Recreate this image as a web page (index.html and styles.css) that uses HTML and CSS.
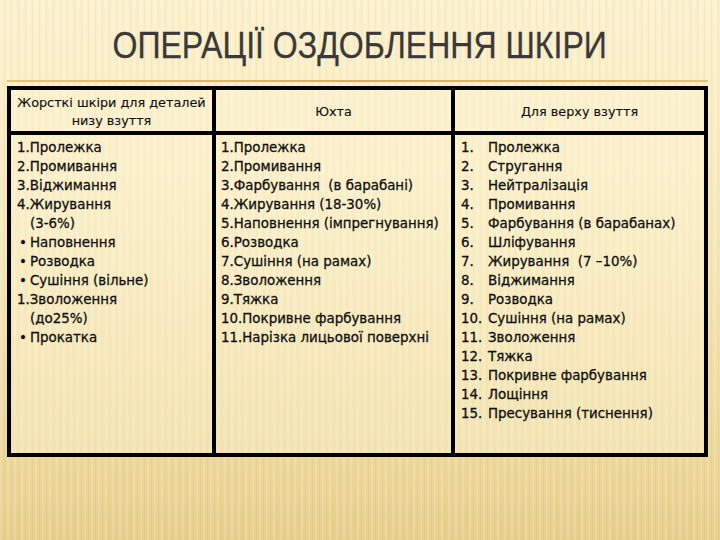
FILE: index.html
```html
<!DOCTYPE html>
<html lang="uk">
<head>
<meta charset="utf-8">
<title>Операції оздоблення шкіри</title>
<link rel="stylesheet" href="styles.css">
</head>
<body>
<div class="slide">
  <div class="title-wrap"><h1 class="title">ОПЕРАЦІЇ ОЗДОБЛЕННЯ ШКІРИ</h1></div>
  <div class="rule"></div>
  <div class="grid">
    <div class="cell head c1">Жорсткі шкіри для деталей<br>низу взуття</div>
    <div class="cell head c2">Юхта</div>
    <div class="cell head c3">Для верху взуття</div>

    <div class="cell body c1">
      <div>1.Пролежка</div>
      <div>2.Промивання</div>
      <div>3.Віджимання</div>
      <div>4.Жирування</div>
      <div class="ind">(3-6%)</div>
      <div class="bul">Наповнення</div>
      <div class="bul">Розводка</div>
      <div class="bul">Сушіння (вільне)</div>
      <div>1.Зволоження</div>
      <div class="ind">(до25%)</div>
      <div class="bul">Прокатка</div>
    </div>
    <div class="cell body c2">
      <div>1.Пролежка</div>
      <div>2.Промивання</div>
      <div>3.Фарбування &nbsp;(в барабані)</div>
      <div>4.Жирування (18-30%)</div>
      <div>5.Наповнення (імпрегнування)</div>
      <div>6.Розводка</div>
      <div>7.Сушіння (на рамах)</div>
      <div>8.Зволоження</div>
      <div>9.Тяжка</div>
      <div>10.Покривне фарбування</div>
      <div>11.Нарізка лицьової поверхні</div>
    </div>
    <div class="cell body c3">
      <div class="li"><span class="n">1.</span>Пролежка</div>
      <div class="li"><span class="n">2.</span>Стругання</div>
      <div class="li"><span class="n">3.</span>Нейтралізація</div>
      <div class="li"><span class="n">4.</span>Промивання</div>
      <div class="li"><span class="n">5.</span>Фарбування (в барабанах)</div>
      <div class="li"><span class="n">6.</span>Шліфування</div>
      <div class="li"><span class="n">7.</span>Жирування &nbsp;(7 –10%)</div>
      <div class="li"><span class="n">8.</span>Віджимання</div>
      <div class="li"><span class="n">9.</span>Розводка</div>
      <div class="li"><span class="n">10.</span>Сушіння (на рамах)</div>
      <div class="li"><span class="n">11.</span>Зволоження</div>
      <div class="li"><span class="n">12.</span>Тяжка</div>
      <div class="li"><span class="n">13.</span>Покривне фарбування</div>
      <div class="li"><span class="n">14.</span>Лощіння</div>
      <div class="li"><span class="n">15.</span>Пресування (тиснення)</div>
    </div>
  </div>
</div>
</body>
</html>
```
FILE: styles.css
```css
html, body {
  margin: 0;
  padding: 0;
}
body {
  width: 720px;
  height: 540px;
  overflow: hidden;
}
.slide {
  width: 720px;
  height: 540px;
  box-sizing: border-box;
  padding-top: 26px;
  background:
    repeating-linear-gradient(90deg, rgba(255,255,255,0.16) 0 2px, rgba(255,255,255,0) 2px 4px, rgba(160,120,40,0.06) 4px 5px, rgba(255,255,255,0) 5px 7px),
    linear-gradient(180deg, #fcf1cd 0%, #f8e9bc 40%, #efdca2 75%, #e8cf8c 100%);
}
.title-wrap {
  height: 40px;
  text-align: center;
}
.title {
  display: inline-block;
  margin: 0;
  font-family: "Liberation Sans", Arial, sans-serif;
  font-weight: normal;
  font-size: 36px;
  line-height: 40px;
  color: #3a3938;
  transform: scaleX(0.89);
  -webkit-text-stroke: 0.3px #3a3938;
}
.rule {
  margin: 14px 12px 0 7px;
  height: 2px;
  background: linear-gradient(90deg, #e2c37a, #d7ae55 50%, #e2c37a);
}
.grid {
  margin: 4px 0 0 7px;
  width: 701px;
  height: 371px;
  box-sizing: border-box;
  border: 4px solid #000;
  display: grid;
  grid-template-columns: 205px 239px 249px;
  grid-template-rows: 45px 1fr;
  font-family: "DejaVu Sans", sans-serif;
  color: #111;
  background: rgba(255, 250, 220, 0.35);
}
.cell {
  box-sizing: border-box;
}
.c1, .c2 {
  border-right: 4px solid #000;
}
.head {
  border-bottom: 4px solid #000;
  display: flex;
  align-items: center;
  justify-content: center;
  text-align: center;
  font-size: 12.8px;
  line-height: 18px;
  padding-top: 3px;
  -webkit-text-stroke: 0.15px #111;
}
.body {
  padding-top: 3px;
  font-size: 13.4px;
  line-height: 19px;
  white-space: nowrap;
  -webkit-text-stroke: 0.3px #111;
}
.body.c1 { padding-left: 6px; }
.body.c2 { padding-left: 5px; }
.body.c3 { padding-left: 6px; }
.ind { padding-left: 13px; }
.bul::before {
  content: "•";
  display: inline-block;
  width: 11px;
  padding-left: 2px;
}
.li { display: flex; }
.n {
  display: inline-block;
  min-width: 27px;
}
```
